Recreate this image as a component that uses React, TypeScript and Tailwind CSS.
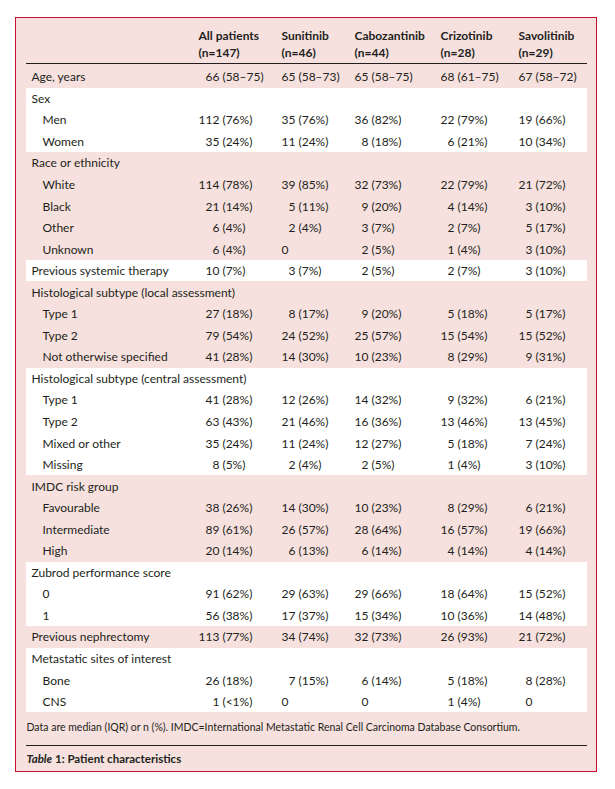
import React from 'react';

type Row = { label: string; values?: string[]; indent?: boolean };
type Group = { rows: Row[] };

const F = '\u2007';

const columns = [
  ['All patients', '(n=147)'],
  ['Sunitinib', '(n=46)'],
  ['Cabozantinib', '(n=44)'],
  ['Crizotinib', '(n=28)'],
  ['Savolitinib', '(n=29)'],
];

// digits each column's counts are padded to
const widths = [3, 2, 2, 2, 2];

const groups: Group[] = [
  { rows: [{ label: 'Age, years', values: ['66 (58–75)', '65 (58–73)', '65 (58–75)', '68 (61–75)', '67 (58–72)'] }] },
  {
    rows: [
      { label: 'Sex' },
      { label: 'Men', indent: true, values: ['112 (76%)', '35 (76%)', '36 (82%)', '22 (79%)', '19 (66%)'] },
      { label: 'Women', indent: true, values: ['35 (24%)', '11 (24%)', '8 (18%)', '6 (21%)', '10 (34%)'] },
    ],
  },
  {
    rows: [
      { label: 'Race or ethnicity' },
      { label: 'White', indent: true, values: ['114 (78%)', '39 (85%)', '32 (73%)', '22 (79%)', '21 (72%)'] },
      { label: 'Black', indent: true, values: ['21 (14%)', '5 (11%)', '9 (20%)', '4 (14%)', '3 (10%)'] },
      { label: 'Other', indent: true, values: ['6 (4%)', '2 (4%)', '3 (7%)', '2 (7%)', '5 (17%)'] },
      { label: 'Unknown', indent: true, values: ['6 (4%)', '0', '2 (5%)', '1 (4%)', '3 (10%)'] },
    ],
  },
  { rows: [{ label: 'Previous systemic therapy', values: ['10 (7%)', '3 (7%)', '2 (5%)', '2 (7%)', '3 (10%)'] }] },
  {
    rows: [
      { label: 'Histological subtype (local assessment)' },
      { label: 'Type 1', indent: true, values: ['27 (18%)', '8 (17%)', '9 (20%)', '5 (18%)', '5 (17%)'] },
      { label: 'Type 2', indent: true, values: ['79 (54%)', '24 (52%)', '25 (57%)', '15 (54%)', '15 (52%)'] },
      { label: 'Not otherwise specified', indent: true, values: ['41 (28%)', '14 (30%)', '10 (23%)', '8 (29%)', '9 (31%)'] },
    ],
  },
  {
    rows: [
      { label: 'Histological subtype (central assessment)' },
      { label: 'Type 1', indent: true, values: ['41 (28%)', '12 (26%)', '14 (32%)', '9 (32%)', '6 (21%)'] },
      { label: 'Type 2', indent: true, values: ['63 (43%)', '21 (46%)', '16 (36%)', '13 (46%)', '13 (45%)'] },
      { label: 'Mixed or other', indent: true, values: ['35 (24%)', '11 (24%)', '12 (27%)', '5 (18%)', '7 (24%)'] },
      { label: 'Missing', indent: true, values: ['8 (5%)', '2 (4%)', '2 (5%)', '1 (4%)', '3 (10%)'] },
    ],
  },
  {
    rows: [
      { label: 'IMDC risk group' },
      { label: 'Favourable', indent: true, values: ['38 (26%)', '14 (30%)', '10 (23%)', '8 (29%)', '6 (21%)'] },
      { label: 'Intermediate', indent: true, values: ['89 (61%)', '26 (57%)', '28 (64%)', '16 (57%)', '19 (66%)'] },
      { label: 'High', indent: true, values: ['20 (14%)', '6 (13%)', '6 (14%)', '4 (14%)', '4 (14%)'] },
    ],
  },
  {
    rows: [
      { label: 'Zubrod performance score' },
      { label: '0', indent: true, values: ['91 (62%)', '29 (63%)', '29 (66%)', '18 (64%)', '15 (52%)'] },
      { label: '1', indent: true, values: ['56 (38%)', '17 (37%)', '15 (34%)', '10 (36%)', '14 (48%)'] },
    ],
  },
  { rows: [{ label: 'Previous nephrectomy', values: ['113 (77%)', '34 (74%)', '32 (73%)', '26 (93%)', '21 (72%)'] }] },
  {
    rows: [
      { label: 'Metastatic sites of interest' },
      { label: 'Bone', indent: true, values: ['26 (18%)', '7 (15%)', '6 (14%)', '5 (18%)', '8 (28%)'] },
      { label: 'CNS', indent: true, values: ['1 (<1%)', '0', '0', '1 (4%)', '0'] },
    ],
  },
];

function pad(value: string, col: number) {
  // the Sunitinib column leaves its zeros unpadded
  if (value === '0' && col === 1) return value;
  const digits = (value.match(/^\d+/) || [''])[0].length;
  return F.repeat(Math.max(0, widths[col] - digits)) + value;
}

const grid = 'grid grid-cols-[173px_83px_73px_86px_78px_67px]';

function TableRow({ row }: { row: Row }) {
  return (
    <div className={`${grid} h-[21.55px] items-center`}>
      <div
        className={`whitespace-nowrap ${row.indent ? 'pl-[17px]' : 'pl-[6px]'} ${row.values ? '' : 'col-span-6'}`}
      >
        {row.label}
      </div>
      {row.values?.map((v, i) => (
        <div key={i} className="whitespace-pre tabular-nums">
          {pad(v, i)}
        </div>
      ))}
    </div>
  );
}

export default function App() {
  return (
    <div className="w-[615px] h-[789px] bg-white pt-[17px] pl-[15px] font-['Lato',sans-serif] text-[#231f20]">
      <div className="w-[582px] border-[1.5px] border-[#c8102e] bg-[#f6e1de] px-[9.5px]">
        <div className={`${grid} border-b border-[#231f20] pt-[9px] pb-[2px] text-[12px] leading-[17px] font-bold`}>
          <div />
          {columns.map(([name, n]) => (
            <div key={name}>
              <div>{name}</div>
              <div>{n}</div>
            </div>
          ))}
        </div>
        <div className="pt-[2px] text-[12px] leading-[15px]">
          {groups.map((g, gi) => (
            <div key={gi} className={gi % 2 === 1 ? 'bg-white' : ''}>
              {g.rows.map((r, ri) => (
                <TableRow key={ri} row={r} />
              ))}
            </div>
          ))}
        </div>
        <div className="pt-[8px] pl-[1px] text-[10.5px] leading-[15px]">
          Data are median (IQR) or n (%). IMDC=International Metastatic Renal Cell Carcinoma Database Consortium.
        </div>
        <div className="mt-[10px] border-t border-[#231f20] pt-[5px] pb-[5px] pl-[1px] text-[11.5px] leading-[15px] font-bold">
          <span className="italic">Table</span> 1: Patient characteristics
        </div>
      </div>
    </div>
  );
}
